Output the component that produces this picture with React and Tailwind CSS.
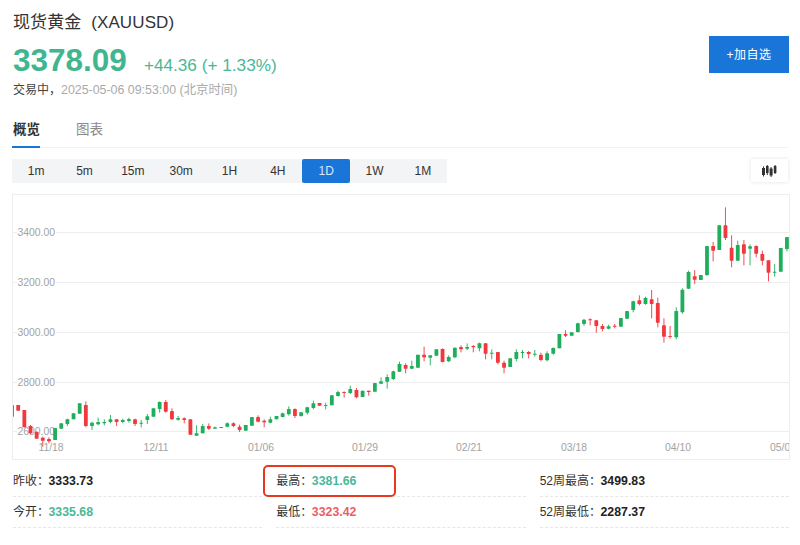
const G = "#1fae5c";
const R = "#f0383e";
const SANS = "font-['Liberation_Sans','Noto_Sans_CJK_SC',sans-serif]";

// [colour, bodyTop, bodyBottom, wickTop, wickBottom] in 3x crop rows
const seg1 = [
  [G,645,680],[R,645,662],[R,660,712],[R,708,730,705,733],[R,725,746],[R,743,752,740,770],[R,747,754,742,760],
  [G,714,750],[G,700,716],[G,688,702,686,708],[G,670,688],[G,640,671],[R,645,708,634,712],[G,698,708,695,720],
  [G,696,703,683,706],[G,696,700,688,706],[G,688,696,675,700],[R,688,696,688,708],[G,690,696,686,700],[G,687,693,683,698],
  [R,688,702,686,708],[G,698,701,690,712],[G,679,690,672,702],[G,655,680],[G,636,657,634,668],[R,636,665,630,668],
  [R,663,688,655,690],[G,684,689,678,692],[R,685,690,682,700],[R,688,734],[G,730,737,706,737],[G,708,730,702,730],
  [R,708,716,700,720],[G,712,716,710,716],[R,711,713],[G,700,710,697,712],[R,700,708,697,712],[R,710,720,704,726],
  [G,705,722],[G,681,707],[R,681,695,676,697],[R,692,697,688,712],
];
const seg2 = [
  [G,388,398,380,400],[G,378,388],[G,370,381,368,382],[G,357,373,349,377],[R,357,378,355,384],[G,367,378,366,380],
  [G,352,368,350,374],[G,340,354,332,358],[R,339,347],[G,345,348,338,358],[G,316,346],[G,306,318,302,320],[R,306,308,304,323],
  [G,297,309,287,312],[R,300,322,294,325],[G,302,321],[R,302,306,302,317],[G,279,305],[G,274,281,262,282],[G,261,275,253,296],
  [G,244,267,242,270],[G,222,245,215,246],[R,225,236,220,250],[G,228,236,212,237],[G,194,233],[R,194,202,170,214],
  [G,196,203,196,226],[G,178,197],[R,177,216,175,217],[G,201,214,196,216],[G,173,202,172,205],[R,171,178,166,187],
  [G,171,176,160,180],[R,168,172,165,187],[G,160,175,158,184],[R,160,191,160,208],[G,188,191,178,208],[R,186,218,186,223],
  [R,218,233,212,250],[G,205,231],[G,186,207,178,214],[G,186,188,180,205],[R,186,192,183,205],
];
const seg3 = [
  [G,491,494,480,500],[R,494,510,488,514],[G,490,511,484,514],[G,474,491,472,494],[G,432,475],[R,432,437,421,441],[G,427,437],
  [G,400,426,398,428],[G,389,402,387,408],[R,388,391,385,406],[R,391,408,390,428],[R,408,417,402,424],[G,409,416,404,418],
  [R,407,409,402,415],[G,384,410],[G,363,386],[G,334,360,332,367],[R,331,342,316,346],[G,324,342,320,344],[R,328,342,300,385],
  [R,339,398,323,412],[R,406,440,385,458],[R,438,441,408,446],[G,363,442,352,448],[G,299,367,295,371],[G,246,296,242,297],
  [R,259,269,240,282],[G,255,270],[G,168,255,168,258],[R,168,182,156,214],[G,106,180],[R,106,144,52,150],[R,173,212,136,232],
  [G,165,212,152,212],[R,163,191,150,226],[G,169,176,163,226],[R,168,191,166,202],[R,192,212,182,226],[R,211,248,211,274],
  [G,245,248,222,260],[G,174,245],[G,141,177,141,184],
];
const toY = (z, off) => off + z / 3;
const candles = [
  ...seg1.map((c) => c.map((v, k) => (k ? toY(v, 190) : v))),
  ...seg2.map((c) => c.map((v, k) => (k ? toY(v, 290) : v))),
  ...seg3.map((c) => c.map((v, k) => (k ? toY(v, 190) : v))),
];

const OX = 13;
const OY = 195;
const gridYs = [232.5, 282.5, 332.5, 382.5, 431.5];
const yLabels = ["3400.00", "3200.00", "3000.00", "2800.00", "2600.00"];
const xLabels = [["11/18", 51], ["12/11", 156], ["01/06", 261], ["01/29", 365], ["02/21", 469], ["03/18", 574], ["04/10", 678], ["05/06", 783]];

function Chart() {
  return (
    <svg width="776" height="265" viewBox={`${OX} ${OY} 776 265`} className="block">
      {gridYs.map((y) => (
        <line key={y} x1={OX} x2={OX + 776} y1={y} y2={y} stroke="#eeeeee" strokeWidth="1" />
      ))}
      {yLabels.map((t, i) => (
        <g key={t}>
          <rect x="17" y={gridYs[i] - 3} width="39" height="6" fill="#fff" />
          <text x="17.5" y={gridYs[i] + 3.8} fontSize="10.4" fill="#a3a3a3" fontFamily="Liberation Sans, sans-serif">{t}</text>
        </g>
      ))}
      {candles.map((c, i) => {
        const x = 12.05 + 6.15 * i;
        const [col, top, bot, wt, wb] = c;
        return (
          <g key={i}>
            <line x1={x} x2={x} y1={wt ?? top} y2={wb ?? bot} stroke={col} strokeWidth="0.9" />
            <rect x={x - 1.9} y={top} width="3.8" height={Math.max(bot - top, 1)} rx="0.4" fill={col} />
          </g>
        );
      })}
      {xLabels.map(([t, x]) => (
        <text key={t} x={x} y="450.7" textAnchor="middle" fontSize="10.4" fill="#a3a3a3" fontFamily="Liberation Sans, sans-serif">{t}</text>
      ))}
    </svg>
  );
}

function Stat({ label, value, color }) {
  return (
    <div className="h-[31px] flex items-center border-b border-dashed border-[#e6e6e6] text-[12px] whitespace-nowrap">
      <span className="text-[#333]">{label}：</span>
      <span className={`font-bold text-[12.3px] -ml-[0.5px] ${color}`}>{value}</span>
    </div>
  );
}

const intervals = ["1m", "5m", "15m", "30m", "1H", "4H", "1D", "1W", "1M"];

export default function App() {
  return (
    <div className={`w-[800px] h-[545px] overflow-hidden bg-white ${SANS} text-[#333]`}>
      <div className="flex justify-between pl-[13px] pr-[11px]">
        <div>
          <div className="pt-[12px] h-[37px] text-[17px] leading-[22px] tracking-[0.1px] text-[#333] whitespace-nowrap">
            现货黄金 <span className="ml-[5px]">(XAUUSD)</span>
          </div>
          <div className="flex items-baseline h-[42px] text-[#3fb68f] whitespace-nowrap">
            <span className="text-[31.5px] leading-[46px] font-bold">3378.09</span>
            <span className="ml-[17px] text-[17.2px] leading-[47px] text-[#4ab797]">+44.36 (+ 1.33%)</span>
          </div>
          <div className="h-[22px] text-[12px] leading-[22px] whitespace-nowrap">
            <span className="text-[#444]">交易中，</span>
            <span className="text-[#aaaaaa] text-[12.4px]">2025-05-06 09:53:00 (北京时间)</span>
          </div>
        </div>
        <button className="mt-[36px] w-[80px] h-[37px] bg-[#1976d8] text-white text-[12px] tracking-[0.5px]">+加自选</button>
      </div>

      <div className="mt-[19px] mx-[12px] h-[28px] w-[776px] flex border-b border-[#f3f3f3] text-[13.5px] leading-[20px]">
        <div className="w-[28px] h-[28px] border-b-[2px] border-[#1976d8] font-bold text-[#333] pl-[1px] whitespace-nowrap">概览</div>
        <div className="ml-[36px] text-[#888] whitespace-nowrap">图表</div>
      </div>

      <div className="mt-[11px] mx-[12px] flex justify-between items-start">
        <div className="flex w-[435px] h-[24px] bg-[#f3f4f6] text-[12px] text-[#333]">
          {intervals.map((t) => (
            <div key={t} className={`flex-1 flex items-center justify-center ${t === "1D" ? "bg-[#1976d8] text-[#d8e8fa] rounded-[2px]" : ""}`}>{t}</div>
          ))}
        </div>
        <div className="w-[37px] h-[23px] bg-white rounded-[2px] shadow-[0_0_4px_rgba(0,0,0,0.12)] flex items-center justify-center">
          <svg width="15" height="12" viewBox="0 0 15 12" fill="#333333">
            <rect x="0" y="3" width="3" height="7" />
            <rect x="1" y="1.5" width="1" height="10" />
            <rect x="4" y="1" width="2.6" height="7" />
            <rect x="4.8" y="0" width="1" height="10" />
            <rect x="7.6" y="3.5" width="3" height="7" />
            <rect x="8.6" y="2" width="1" height="10" />
            <rect x="11.8" y="1" width="2.6" height="7" />
            <rect x="12.6" y="0" width="1" height="9" />
          </svg>
        </div>
      </div>

      <div className="mt-[11px] ml-[12px] w-[778px] h-[266px] border border-[#eeeeee] overflow-hidden">
        <Chart />
      </div>

      <div className="mt-[6px] ml-[13px] w-[776px] grid grid-cols-3 gap-x-[14px]">
        <Stat label="昨收" value="3333.73" color="text-[#222]" />
        <div className="relative">
          <Stat label="最高" value="3381.66" color="text-[#4ab79a]" />
          <div className="absolute left-[-13px] top-[-1px] w-[133px] h-[32px] border-[2px] border-[#e8391f] rounded-[5px]" />
        </div>
        <Stat label="52周最高" value="3499.83" color="text-[#222]" />
        <Stat label="今开" value="3335.68" color="text-[#4ab79a]" />
        <Stat label="最低" value="3323.42" color="text-[#ee5d66]" />
        <Stat label="52周最低" value="2287.37" color="text-[#222]" />
      </div>
    </div>
  );
}
